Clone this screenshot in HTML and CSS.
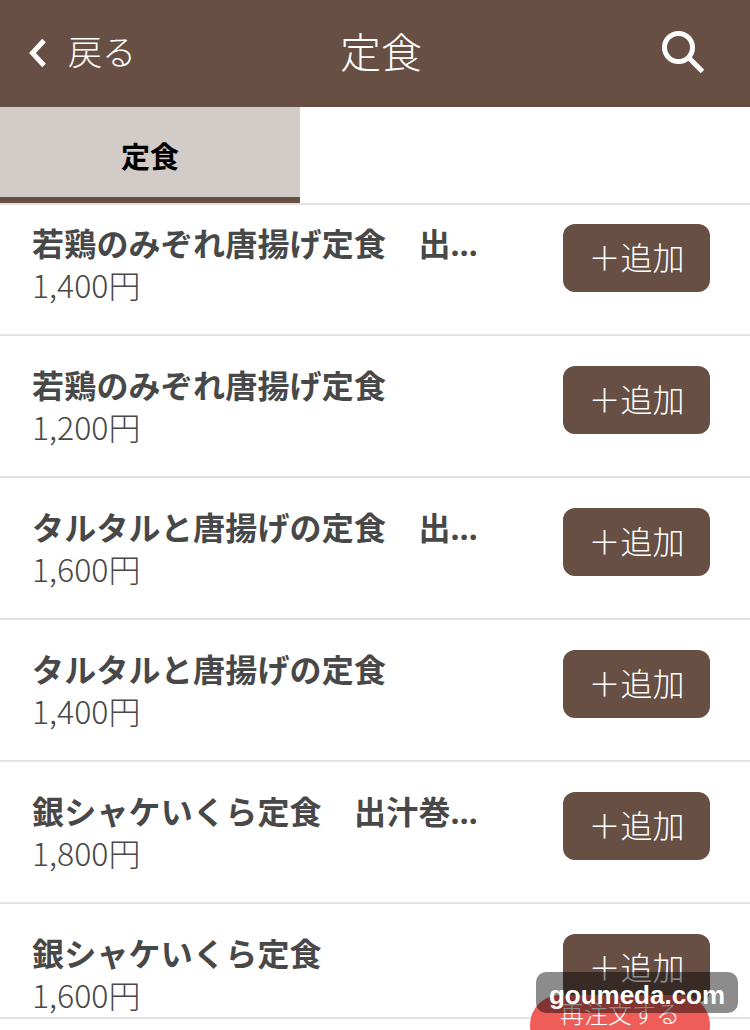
FILE: index.html
```html
<!DOCTYPE html>
<html lang="ja">
<head>
    <meta charset="UTF-8">
    <meta name="viewport" content="width=device-width, initial-scale=1.0">
    <title>定食</title>
    <link rel="stylesheet" href="styles.css">
</head>
<body>
    <header class="topbar">
        <a class="back">
            <svg class="back-icon" width="22" height="30" viewBox="0 0 22 30">
                <path d="M17 2.5 L5.5 15 L17 27.5" fill="none" stroke="#fff" stroke-width="5"/>
            </svg>
            <span>戻る</span>
        </a>
        <h1 class="title">定食</h1>
        <svg class="search-icon" width="46" height="46" viewBox="0 0 46 46">
            <circle cx="18.5" cy="18.5" r="14" fill="none" stroke="#fff" stroke-width="5"/>
            <path d="M28.5 28.5 L42.5 42.5" fill="none" stroke="#fff" stroke-width="5"/>
        </svg>
    </header>

    <nav class="tabs">
        <div class="tab active">定食</div>
    </nav>

    <main class="menu">
        <div class="item first">
            <div class="info">
                <div class="name">若鶏のみぞれ唐揚げ定食　出汁巻き玉子付き</div>
                <div class="price">1,400円</div>
            </div>
            <button class="add">＋追加</button>
        </div>
        <div class="item">
            <div class="info">
                <div class="name">若鶏のみぞれ唐揚げ定食</div>
                <div class="price">1,200円</div>
            </div>
            <button class="add">＋追加</button>
        </div>
        <div class="item">
            <div class="info">
                <div class="name">タルタルと唐揚げの定食　出汁巻き玉子付き</div>
                <div class="price">1,600円</div>
            </div>
            <button class="add">＋追加</button>
        </div>
        <div class="item">
            <div class="info">
                <div class="name">タルタルと唐揚げの定食</div>
                <div class="price">1,400円</div>
            </div>
            <button class="add">＋追加</button>
        </div>
        <div class="item">
            <div class="info">
                <div class="name">銀シャケいくら定食　出汁巻き玉子付き</div>
                <div class="price">1,800円</div>
            </div>
            <button class="add">＋追加</button>
        </div>
        <div class="item">
            <div class="info">
                <div class="name">銀シャケいくら定食</div>
                <div class="price">1,600円</div>
            </div>
            <button class="add">＋追加</button>
        </div>
    </main>

    <footer class="bottom">
        <button class="reorder">再注文する</button>
    </footer>
    <div class="watermark">goumeda.com</div>
</body>
</html>
```

FILE: styles.css
```css
html, body {
    margin: 0;
    padding: 0;
    width: 100%;
    height: 100%;
    overflow: hidden;
    background: #fff;
    font-family: "Noto Sans CJK JP", "Noto Sans", sans-serif;
}

body {
    position: relative;
}

.topbar {
    display: flex;
    align-items: center;
    justify-content: space-between;
    position: relative;
    height: 107px;
    padding: 0 44px 7px 27px;
    box-sizing: border-box;
    background: #674f44;
    color: #fff;
}

.back {
    display: flex;
    align-items: center;
    gap: 19px;
    font-size: 34px;
    font-weight: 300;
}

.back-icon {
    display: block;
    margin-top: 5px;
}

.title {
    position: absolute;
    left: 12px;
    right: 0;
    margin: 0;
    text-align: center;
    font-size: 41px;
    font-weight: 300;
    pointer-events: none;
}

.search-icon {
    display: block;
    margin-top: 4px;
}

.tabs {
    display: flex;
    height: 98px;
    box-sizing: border-box;
    border-bottom: 2px solid #e2e2e2;
}

.tab {
    display: flex;
    align-items: center;
    justify-content: center;
    width: 300px;
    height: 96px;
    padding-top: 5px;
    box-sizing: border-box;
    background: #d2cbc8;
    border-bottom: 6px solid #674f44;
    color: #000;
    font-size: 29px;
    font-weight: 700;
}

.item {
    display: flex;
    justify-content: space-between;
    align-items: flex-start;
    height: 142px;
    box-sizing: border-box;
    padding: 30px 40px 0 32px;
    border-bottom: 2px solid #e2e2e2;
}

.item.first {
    height: 131px;
    padding-top: 19px;
}

.info {
    width: 450px;
    margin-top: -1px;
    color: #484848;
}

.name {
    overflow: hidden;
    white-space: nowrap;
    text-overflow: ellipsis;
    font-family: "Noto Sans", "Noto Sans CJK JP", sans-serif;
    font-size: 32px;
    letter-spacing: 0.2px;
    line-height: 42px;
    font-weight: 700;
}

.price {
    margin-top: -3px;
    font-size: 32px;
    line-height: 44px;
    font-weight: 300;
}

.add {
    width: 147px;
    height: 68px;
    padding: 0 0 4px;
    border: none;
    border-radius: 12px;
    background: #674f44;
    color: #fff;
    font-family: inherit;
    font-size: 32px;
    font-weight: 300;
}

.bottom {
    position: absolute;
    left: 0;
    right: 0;
    top: 1017px;
    height: 13px;
    border-top: 2px solid #e2e2e2;
    background: #fff;
}

.reorder {
    position: absolute;
    left: 530px;
    top: -24px;
    width: 180px;
    height: 60px;
    padding: 0 0 34px;
    border: none;
    border-radius: 30px;
    background: #ee5d58;
    color: #fff;
    font-family: inherit;
    font-size: 24px;
    font-weight: 300;
}

.watermark {
    position: absolute;
    left: 536px;
    top: 972px;
    width: 202px;
    height: 41px;
    border-radius: 10px;
    background: rgba(0, 0, 0, 0.45);
    color: #fff;
    font-family: "Liberation Sans", sans-serif;
    font-size: 26px;
    font-weight: 700;
    line-height: 47px;
    text-align: center;
}
```
